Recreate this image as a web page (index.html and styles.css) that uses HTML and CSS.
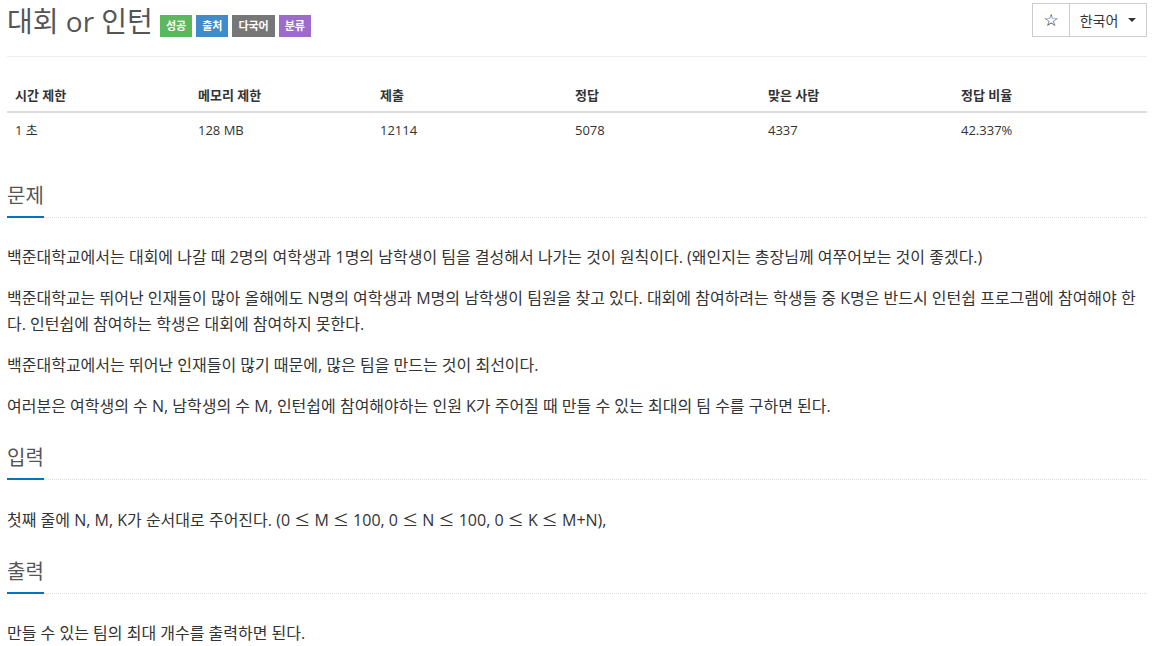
FILE: index.html
```html
<!DOCTYPE html>
<html lang="ko">
<head>
<meta charset="utf-8">
<title>대회 or 인턴</title>
<link rel="stylesheet" href="styles.css">
</head>
<body>
<div class="page">
  <div class="page-header">
    <h1 class="title"><span class="title-text">대회 or 인턴</span><span class="badges"><span class="badge green">성공</span><span class="badge blue">출처</span><span class="badge grey">다국어</span><span class="badge purple">분류</span></span></h1>
    <div class="btn-group">
      <span class="btn star">☆</span>
      <span class="btn lang">한국어 <span class="caret"></span></span>
    </div>
  </div>

  <table class="info">
    <thead>
      <tr><th class="c1">시간 제한</th><th class="c2">메모리 제한</th><th class="c3">제출</th><th class="c4">정답</th><th class="c5">맞은 사람</th><th>정답 비율</th></tr>
    </thead>
    <tbody>
      <tr><td>1 초</td><td>128 MB</td><td>12114</td><td>5078</td><td>4337</td><td>42.337%</td></tr>
    </tbody>
  </table>

  <section class="section first">
    <div class="headline"><h2>문제</h2></div>
    <div class="body">
      <p>백준대학교에서는 대회에 나갈 때 2명의 여학생과 1명의 남학생이 팀을 결성해서 나가는 것이 원칙이다. (왜인지는 총장님께 여쭈어보는 것이 좋겠다.)</p>
      <p>백준대학교는 뛰어난 인재들이 많아 올해에도 N명의 여학생과 M명의 남학생이 팀원을 찾고 있다. 대회에 참여하려는 학생들 중 K명은 반드시 인턴쉽 프로그램에 참여해야 한다. 인턴쉽에 참여하는 학생은 대회에 참여하지 못한다.</p>
      <p>백준대학교에서는 뛰어난 인재들이 많기 때문에, 많은 팀을 만드는 것이 최선이다.</p>
      <p>여러분은 여학생의 수 N, 남학생의 수 M, 인턴쉽에 참여해야하는 인원 K가 주어질 때 만들 수 있는 최대의 팀 수를 구하면 된다.</p>
    </div>
  </section>

  <section class="section">
    <div class="headline"><h2>입력</h2></div>
    <div class="body">
      <p>첫째 줄에 N, M, K가 순서대로 주어진다. (0 <span class="sym">≤</span> M <span class="sym">≤</span> 100, 0 <span class="sym">≤</span> N <span class="sym">≤</span> 100, 0 <span class="sym">≤</span> K <span class="sym">≤</span> M+N),</p>
    </div>
  </section>

  <section class="section">
    <div class="headline"><h2>출력</h2></div>
    <div class="body">
      <p>만들 수 있는 팀의 최대 개수를 출력하면 된다.</p>
    </div>
  </section>
</div>
</body>
</html>
```

FILE: styles.css
```css
html, body {
  margin: 0;
  padding: 0;
  background: #fff;
}
body {
  font-family: "Open Sans", "Noto Sans CJK KR", sans-serif;
  color: #333;
  font-size: 14px;
}
.page {
  width: 1140px;
  padding-left: 7px;
}
.page-header {
  display: flex;
  justify-content: space-between;
  align-items: flex-start;
  border-bottom: 1px solid #eee;
  height: 57px;
  box-sizing: border-box;
}
.title {
  margin: 0;
  padding-top: 1px;
  font-size: 28px;
  font-weight: 400;
  color: #555;
  line-height: 40px;
  display: flex;
  align-items: center;
}
.badges {
  display: inline-flex;
  gap: 4px;
  margin-left: 7px;
  margin-top: 10px;
}
.badge {
  display: inline-block;
  font-size: 11px;
  font-weight: 700;
  color: #fff;
  line-height: 22px;
  height: 22px;
  padding: 0 6px;
}
.green { background: #5cb85c; }
.blue { background: #428bca; }
.grey { background: #777; }
.purple { background: #9d6bcc; }

.btn-group {
  display: flex;
  margin-top: 3px;
}
.btn {
  display: flex;
  align-items: center;
  justify-content: center;
  height: 34px;
  box-sizing: border-box;
  border: 1px solid #ccc;
  font-size: 14px;
  color: #333;
}
.star {
  width: 38px;
  font-family: "DejaVu Sans", sans-serif;
  font-size: 17px;
  color: #222;
}
.lang {
  width: 78px;
  margin-left: -1px;
  gap: 6px;
}
.caret {
  display: inline-block;
  width: 0;
  height: 0;
  border-top: 4px solid #333;
  border-left: 4px solid transparent;
  border-right: 4px solid transparent;
  margin-left: 4px;
}

.info {
  width: 1140px;
  border-collapse: collapse;
  margin-top: 21px;
  font-size: 13px;
}
.info th {
  text-align: left;
  font-weight: 700;
  padding: 8px 8px 7px;
  line-height: 18px;
  border-bottom: 2px solid #ddd;
}
.info td {
  padding: 7px 8px 8px;
  line-height: 20px;
}
.c1 { width: 167px; }
.c2 { width: 166px; }
.c3 { width: 179px; }
.c4 { width: 177px; }
.c5 { width: 177px; }

.headline {
  border-bottom: 1px dotted #ddd;
  height: 46px;
  box-sizing: border-box;
  display: flex;
  align-items: flex-end;
  margin-top: 12px;
}
.first .headline {
  margin-top: 24px;
}
.headline h2 {
  margin: 0 0 -1px 0;
  font-size: 20px;
  font-weight: 400;
  color: #555;
  line-height: 32px;
  padding-bottom: 4px;
  border-bottom: 2px solid #0076c0;
}
.body {
  padding-top: 26px;
}
.body p {
  margin: 0 0 15px 0;
  font-size: 16px;
  line-height: 26px;
}
.sym {
  font-family: "Noto Sans CJK KR", sans-serif;
}
```
